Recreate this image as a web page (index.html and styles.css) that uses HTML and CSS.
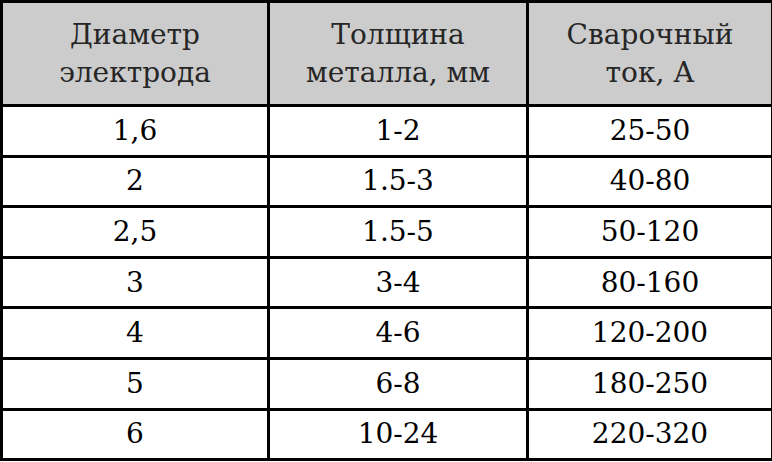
FILE: index.html
```html
<!DOCTYPE html>
<html>
<head>
<meta charset="utf-8">
<link rel="stylesheet" href="styles.css">
</head>
<body>
<table class="tbl">
  <colgroup>
    <col class="c1"><col class="c2"><col class="c3">
  </colgroup>
  <thead>
    <tr class="head">
      <th>Диаметр<br>электрода</th>
      <th>Толщина<br>металла, мм</th>
      <th>Сварочный<br>ток, А</th>
    </tr>
  </thead>
  <tbody>
    <tr><td>1,6</td><td>1-2</td><td>25-50</td></tr>
    <tr><td>2</td><td>1.5-3</td><td>40-80</td></tr>
    <tr><td>2,5</td><td>1.5-5</td><td>50-120</td></tr>
    <tr><td>3</td><td>3-4</td><td>80-160</td></tr>
    <tr><td>4</td><td>4-6</td><td>120-200</td></tr>
    <tr><td>5</td><td>6-8</td><td>180-250</td></tr>
    <tr><td>6</td><td>10-24</td><td>220-320</td></tr>
  </tbody>
</table>
</body>
</html>
```
FILE: styles.css
```css
html, body {
  margin: 0;
  padding: 0;
  background: #ffffff;
}
.tbl {
  border-collapse: collapse;
  table-layout: fixed;
  width: 771px;
  font-family: "DejaVu Serif", "Liberation Serif", serif;
  color: #000;
}
.c1 { width: 267px; }
.c2 { width: 259px; }
.c3 { width: 245px; }
.tbl th, .tbl td {
  border: 3px solid #000;
  text-align: center;
  vertical-align: middle;
  padding: 0;
}
.tbl th {
  background: #cccccc;
  color: #262626;
  font-weight: normal;
  font-size: 28px;
  line-height: 38px;
  height: 101px;
}
.tbl td {
  font-size: 28px;
  line-height: 40px;
  height: 47.6px;
}
```
